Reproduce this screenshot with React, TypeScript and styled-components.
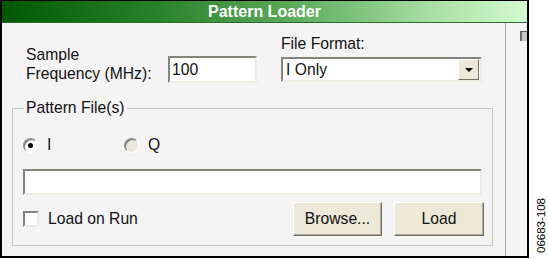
import React from 'react';
import styled, { createGlobalStyle } from 'styled-components';

// Global reset
const GlobalStyle = createGlobalStyle`
  html, body {
    margin: 0;
    padding: 0;
    background: #ffffff;
  }
  body {
    font-family: "Liberation Sans", Arial, sans-serif;
    color: #111;
  }
`;

const FONT_SIZE = '15.7px';

// Sunken 3D edge used by the edit boxes
const sunken = `
  box-sizing: border-box;
  border: 2px solid;
  border-color: #85847a #ecebe4 #ecebe4 #85847a;
  background: #ffffff;
`;

const Page = styled.div`
  display: flex;
  width: 548px;
  height: 259px;
`;

const Window = styled.div`
  width: 529px;
  height: 258px;
  box-sizing: border-box;
  border: 2px solid #000;
  border-top-width: 1px;
  background: #f4f4f4;
  display: flex;
  flex-direction: column;
`;

const TitleBar = styled.div`
  height: 22px;
  box-sizing: border-box;
  border-bottom: 1px solid #2c6b2c;
  background: linear-gradient(to right, #005800 0%, #2a832a 30%, #5aaa5a 55%, #a3dc9e 80%, #d4fbcf 100%);
  display: flex;
  align-items: center;
  justify-content: center;
  color: #ffffff;
  font-weight: bold;
  font-size: 16px;
`;

const Body = styled.div`
  flex: 1;
  display: flex;
`;

const MainPanel = styled.div`
  width: 503px;
  display: flex;
  flex-direction: column;
`;

const SideStrip = styled.div`
  flex: 1;
  border-left: 1px solid #a9a9a9;
  display: flex;
  justify-content: flex-end;
  align-items: flex-start;
  padding-top: 8px;
`;

const ScrollNub = styled.div`
  width: 7px;
  height: 10px;
  box-sizing: border-box;
  border-top: 1px solid #5a5a5a;
  background: linear-gradient(to right, #6e6e6e 0 2px, #c9c9c9 2px);
`;

const TopRow = styled.div`
  height: 60px;
  box-sizing: border-box;
  padding-left: 24px;
  display: flex;
  align-items: flex-end;
`;

const FreqLabel = styled.div`
  width: 142px;
  font-size: ${FONT_SIZE};
  line-height: 19px;
`;

const EditBox = styled.input<{ $width: number; $height: number }>`
  ${sunken}
  width: ${(p) => p.$width}px;
  height: ${(p) => p.$height}px;
  padding: 0 0 0 2px;
  margin: 0;
  font-family: inherit;
  font-size: ${FONT_SIZE};
  color: #111;
  outline: none;
`;

const FormatColumn = styled.div`
  margin-left: 24px;
  margin-bottom: 1px;
  display: flex;
  flex-direction: column;
  gap: 4px;
`;

const FieldCaption = styled.div`
  font-size: ${FONT_SIZE};
  line-height: 19px;
`;

const ComboBox = styled.div`
  ${sunken}
  width: 201px;
  height: 25px;
  padding-left: 3px;
  display: flex;
  align-items: center;
  font-size: ${FONT_SIZE};
`;

const DropButton = styled.div`
  margin-left: auto;
  margin-right: 1px;
  width: 21px;
  height: 21px;
  box-sizing: border-box;
  background: #ece9d8;
  border: 1px solid;
  border-color: #ffffff #716f64 #716f64 #ffffff;
  display: flex;
  align-items: center;
  justify-content: center;
`;

const DownArrow = styled.span`
  width: 0;
  height: 0;
  border-left: 4px solid transparent;
  border-right: 4px solid transparent;
  border-top: 4px solid #000;
  margin-top: 1px;
`;

const GroupBox = styled.fieldset`
  margin: 16px 0 10px 10px;
  width: 481px;
  min-width: 0;
  box-sizing: border-box;
  border: 1px solid #c8c8c0;
  padding: 0 8px 9px 10px;
`;

const GroupTitle = styled.legend`
  padding: 0 2px;
  margin-left: 1px;
  font-size: ${FONT_SIZE};
  line-height: 18px;
`;

const RadioRow = styled.div`
  height: 20px;
  margin-top: 18px;
  display: flex;
  align-items: center;
`;

const RadioOption = styled.label<{ $width?: number }>`
  display: flex;
  align-items: center;
  gap: 9px;
  width: ${(p) => (p.$width ? `${p.$width}px` : 'auto')};
  font-size: ${FONT_SIZE};
`;

const RadioCircle = styled.span<{ $checked?: boolean }>`
  width: 15px;
  height: 15px;
  box-sizing: border-box;
  border-radius: 50%;
  border: 1px solid;
  border-color: #8f8e84 #ffffff #ffffff #8f8e84;
  box-shadow: inset 1px 1px 0 #6a6a62;
  background: ${(p) => (p.$checked ? '#ffffff' : '#ebe9dd')};
  display: flex;
  align-items: center;
  justify-content: center;
`;

const RadioDot = styled.span`
  width: 5px;
  height: 5px;
  border-radius: 50%;
  background: #000;
`;

const PathField = styled.div`
  ${sunken}
  width: 459px;
  height: 26px;
  margin-top: 14px;
`;

const BottomRow = styled.div`
  height: 34px;
  margin-top: 7px;
  display: flex;
  align-items: center;
`;

const CheckBox = styled.span`
  ${sunken}
  width: 16px;
  height: 16px;
  margin-right: 9px;
`;

const CheckLabel = styled.span`
  font-size: ${FONT_SIZE};
`;

const ButtonGroup = styled.div`
  margin-left: auto;
  display: flex;
  gap: 12px;
`;

const PushButton = styled.button<{ $width: number }>`
  width: ${(p) => p.$width}px;
  height: 34px;
  box-sizing: border-box;
  padding: 0;
  background: #ece9d8;
  border: 1px solid;
  border-color: #ffffff #716f64 #716f64 #ffffff;
  box-shadow: inset -1px -1px 0 #aca899;
  font-family: inherit;
  font-size: ${FONT_SIZE};
  color: #111;
`;

const CaptionColumn = styled.div`
  flex: 1;
  display: flex;
  flex-direction: column;
  justify-content: flex-end;
  align-items: center;
  padding-left: 4px;
  padding-bottom: 6px;
`;

const FigureId = styled.span`
  writing-mode: vertical-rl;
  transform: rotate(180deg);
  font-size: 11.5px;
  line-height: 12px;
  color: #000;
`;

const App: React.FC = () => {
  return (
    <>
      <GlobalStyle />
      <Page>
        <Window>
          <TitleBar>Pattern Loader</TitleBar>
          <Body>
            <MainPanel>
              <TopRow>
                <FreqLabel>
                  Sample
                  <br />
                  Frequency (MHz):
                </FreqLabel>
                <EditBox $width={89} $height={27} defaultValue="100" readOnly />
                <FormatColumn>
                  <FieldCaption>File Format:</FieldCaption>
                  <ComboBox>
                    I Only
                    <DropButton>
                      <DownArrow />
                    </DropButton>
                  </ComboBox>
                </FormatColumn>
              </TopRow>
              <GroupBox>
                <GroupTitle>Pattern File(s)</GroupTitle>
                <RadioRow>
                  <RadioOption $width={101}>
                    <RadioCircle $checked>
                      <RadioDot />
                    </RadioCircle>
                    I
                  </RadioOption>
                  <RadioOption>
                    <RadioCircle />
                    Q
                  </RadioOption>
                </RadioRow>
                <PathField />
                <BottomRow>
                  <CheckBox />
                  <CheckLabel>Load on Run</CheckLabel>
                  <ButtonGroup>
                    <PushButton $width={89}>Browse...</PushButton>
                    <PushButton $width={90}>Load</PushButton>
                  </ButtonGroup>
                </BottomRow>
              </GroupBox>
            </MainPanel>
            <SideStrip>
              <ScrollNub />
            </SideStrip>
          </Body>
        </Window>
        <CaptionColumn>
          <FigureId>06683-108</FigureId>
        </CaptionColumn>
      </Page>
    </>
  );
};

export default App;
